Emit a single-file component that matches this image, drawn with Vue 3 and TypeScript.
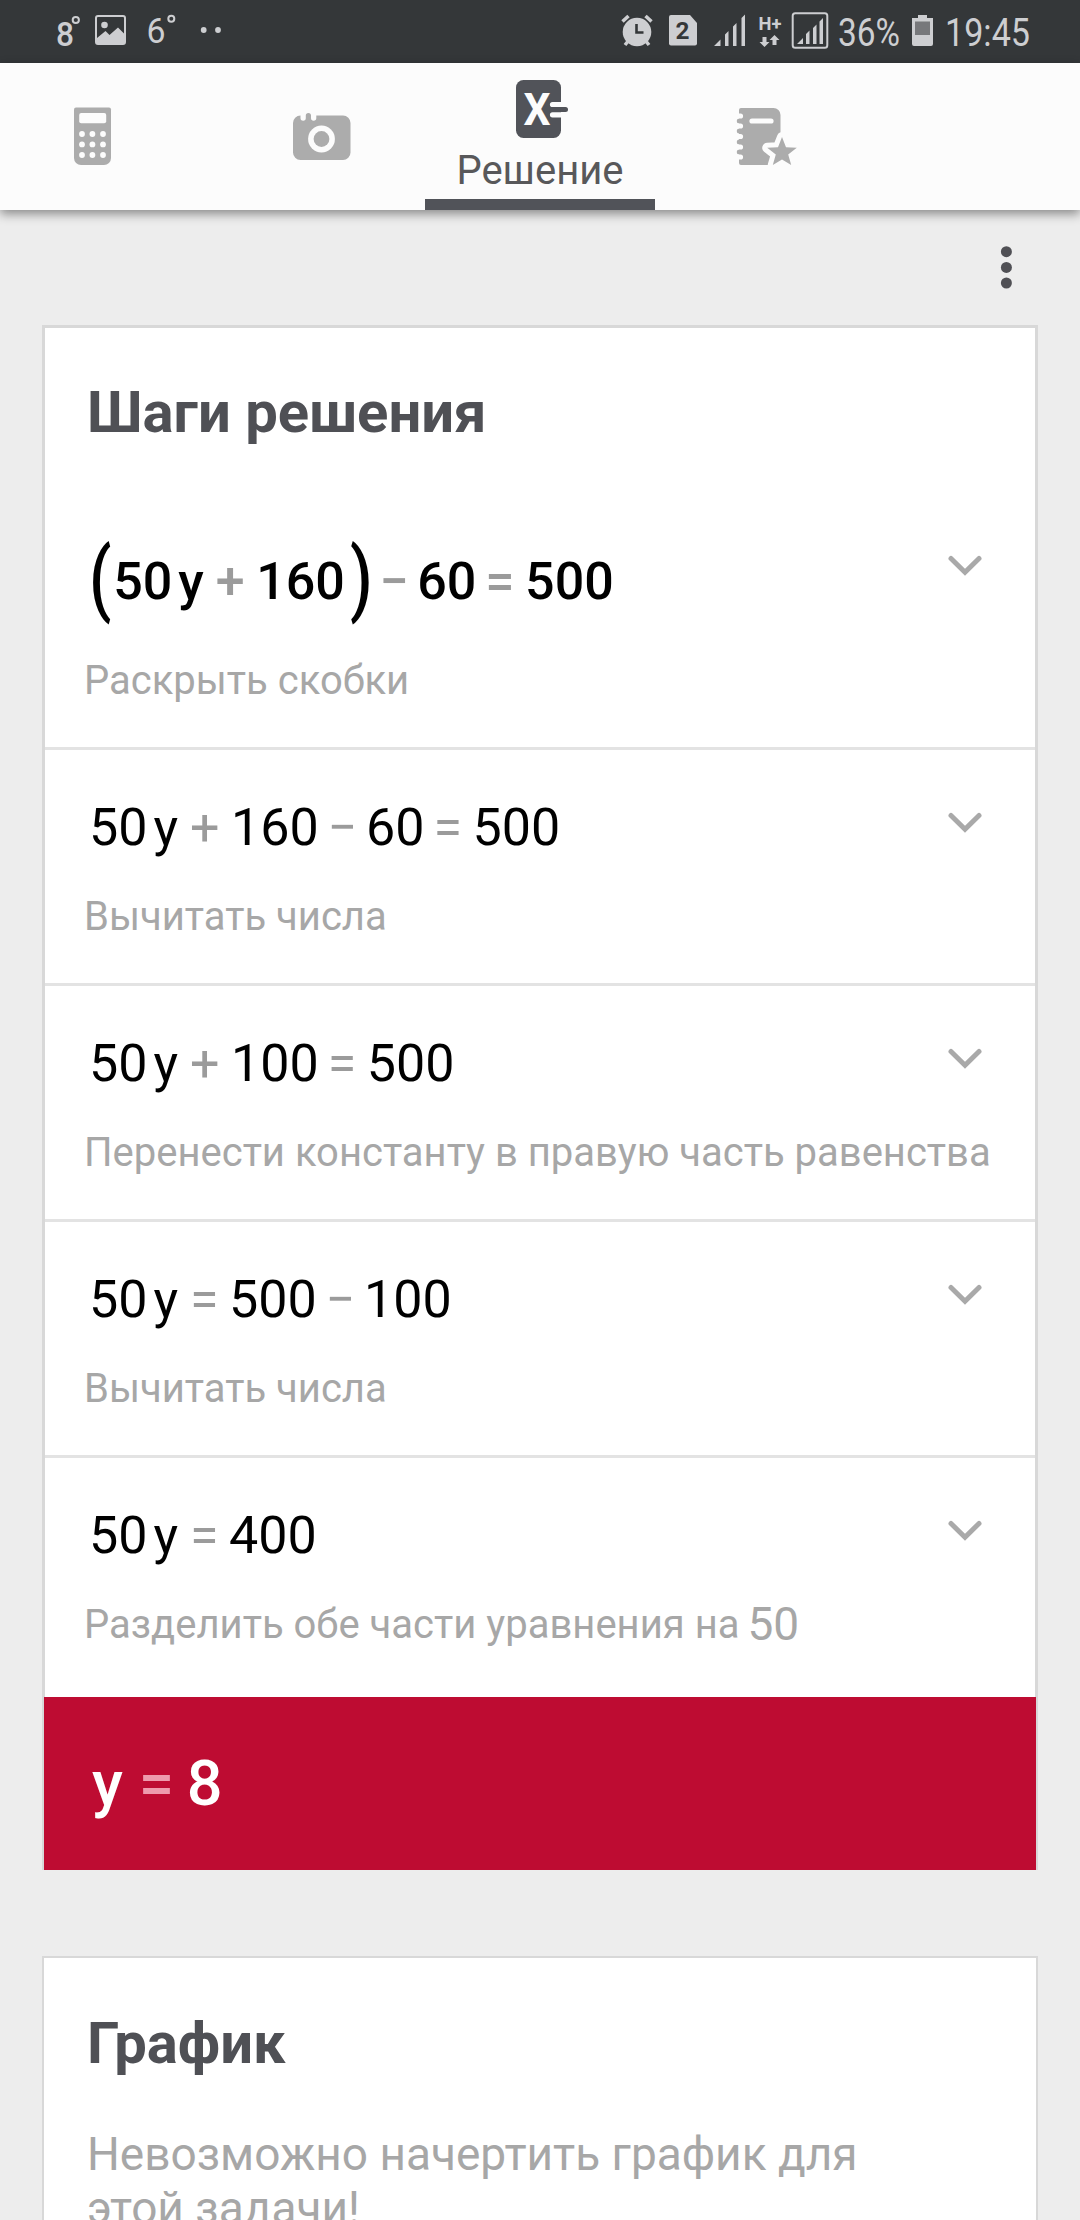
<script setup lang="ts">
interface Token {
  kind: string
  text: string
}

interface Step {
  tokens: Token[]
  caption: string
  value?: string
  current?: boolean
}

const operators: Record<string, string> = {
  '+': 'op plus',
  '−': 'op minus',
  '=': 'op equals',
  '(': 'paren open',
  ')': 'paren close',
}

function parse(source: string): Token[] {
  return source.split(' ').map((text) => ({
    kind: operators[text] ?? (/^\d+$/.test(text) ? 'num' : 'var'),
    text,
  }))
}

const steps: Step[] = [
  { tokens: parse('( 50 y + 160 ) − 60 = 500'), caption: 'Раскрыть скобки', current: true },
  { tokens: parse('50 y + 160 − 60 = 500'), caption: 'Вычитать числа' },
  { tokens: parse('50 y + 100 = 500'), caption: 'Перенести константу в правую часть равенства' },
  { tokens: parse('50 y = 500 − 100'), caption: 'Вычитать числа' },
  { tokens: parse('50 y = 400'), caption: 'Разделить обе части уравнения на', value: '50' },
]

const answer = parse('y = 8')
const keyColumns = [82, 92.4, 103]
const keyRows = [134, 144.4, 155]
</script>

<template>
  <div class="screen">
    <header class="status">
      <svg class="s-temp" viewBox="54 10 30 44" width="30" height="44">
        <text x="56" y="45.5" font-size="33" font-weight="500" textLength="18" lengthAdjust="spacingAndGlyphs">8</text>
        <circle cx="75.8" cy="20" r="3.1" class="line" />
      </svg>
      <svg class="s-photo" viewBox="95 10 31 44" width="31" height="44">
        <rect x="96" y="16" width="29" height="28" rx="2" class="line" />
        <circle cx="104.5" cy="25" r="3.3" />
        <path d="M97 38l8.500-7 4 4 8.500-7.500 7 7V44H97z" />
      </svg>
      <svg class="s-temp2" viewBox="146 10 32 44" width="32" height="44">
        <text x="146.500" y="43" font-size="35" textLength="19" lengthAdjust="spacingAndGlyphs">6</text>
        <circle cx="171.300" cy="18.700" r="3" class="line" />
      </svg>
      <svg class="s-more" viewBox="200 10 22 44" width="22" height="44">
        <circle cx="203.700" cy="30" r="2.900" />
        <circle cx="218" cy="30" r="2.900" />
      </svg>
      <svg class="s-alarm" viewBox="621 10 32 44" width="32" height="44">
        <circle cx="637" cy="32" r="14.300" />
        <path d="M622.500 21.500l6-5.500M651.500 21.500l-6-5.500M629 40l-4 5M645 40l4 5" class="line thick" />
        <path d="M636.500 24v8.500h7" class="dark-line" />
      </svg>
      <svg class="s-sim" viewBox="669 10 28 44" width="28" height="44">
        <path d="M671 15h19l7 8v20.500a2 2 0 0 1-2 2h-24a2 2 0 0 1-2-2V17a2 2 0 0 1 2-2z" />
        <text x="675.500" y="39" font-size="23" font-weight="700" class="dark" textLength="14" lengthAdjust="spacingAndGlyphs">2</text>
      </svg>
      <svg class="s-signal" viewBox="713 10 33 44" width="33" height="44">
        <path d="M714 46l6.500-6.500V46zM725 46V34.500l3.500-3.500v15zM733 46V26.500l3.500-3.500v23zM741.500 46V18l3.500-3.500V46z" />
      </svg>
      <svg class="s-data" viewBox="758 10 24 44" width="24" height="44">
        <text x="758.500" y="30.300" font-size="18.500" font-weight="700" textLength="23" lengthAdjust="spacingAndGlyphs">H+</text>
        <path d="M762.500 37h4v5h3l-5 5-5-5h3zM772.500 45h4v-5h3l-5-5-5 5h3z" />
      </svg>
      <svg class="s-signal2" viewBox="791 10 38 44" width="38" height="44">
        <rect x="792.700" y="13.200" width="34.600" height="34.600" rx="2.500" class="line" />
        <path d="M797 44l6-6v6zM806 44V34l3.500-3.500V44zM813 44V28l3.500-3.500V44zM819.500 44V21.500l3.500-3.500v26z" />
      </svg>
      <svg class="s-percent" viewBox="835 4 68 56" width="68" height="56">
        <text x="838" y="46" font-size="38.500" textLength="62" lengthAdjust="spacingAndGlyphs">36%</text>
      </svg>
      <svg class="s-battery" viewBox="912 10 21 44" width="21" height="44">
        <path d="M918 15h9v3h6v26a2 2 0 0 1-2 2h-17a2 2 0 0 1-2-2V18h6z" />
        <rect x="915" y="21.500" width="15" height="13.500" class="drained" />
      </svg>
      <svg class="s-clock" viewBox="942 4 92 56" width="92" height="56">
        <text x="945" y="46" font-size="38.500" textLength="85" lengthAdjust="spacingAndGlyphs">19:45</text>
      </svg>
    </header>

    <nav class="tabs">
      <a class="tab calc">
        <svg viewBox="74 107 38 58" width="38" height="58">
          <path d="M76 107.500h33a2 2 0 0 1 2 2V158a7 7 0 0 1-7 7H81a7 7 0 0 1-7-7v-48.500a2 2 0 0 1 2-2z" />
          <rect x="79.200" y="113" width="27" height="10.300" rx="2" class="hole" />
          <template v-for="cy in keyRows" :key="cy">
            <circle v-for="cx in keyColumns" :key="cx" :cx="cx" :cy="cy" r="2.900" class="hole" />
          </template>
        </svg>
      </a>
      <a class="tab camera">
        <svg viewBox="293 107 58 58" width="58" height="58">
          <path d="M300.500 115.500v2.500a2.500 2.500 0 0 0 5.300 0v-2.500a2.500 2.500 0 0 1 5.200 0v2.500a2.500 2.500 0 0 0 5.300 0v-2.500H343a7.500 7.500 0 0 1 7.500 7.500v29.500a7.500 7.500 0 0 1-7.500 7.500h-42.500a7.500 7.500 0 0 1-7.500-7.500V123a7.500 7.500 0 0 1 7.500-7.500z" />
          <circle cx="321.500" cy="139" r="13.400" class="hole" />
          <circle cx="321.500" cy="139" r="7.900" />
        </svg>
      </a>
      <a class="tab solution">
        <svg viewBox="516 80 53 58" width="53" height="58">
          <rect x="516" y="80" width="45" height="58" rx="7.500" />
          <text x="523.500" y="125" font-size="44" font-weight="700" class="hole" textLength="27" lengthAdjust="spacingAndGlyphs">X</text>
          <path d="M552.500 104.500H562M552.500 114.800H562" class="slot" />
          <path d="M552 109.500H565.500" class="dash" />
        </svg>
        <span class="tab-label">Решение</span>
        <span class="indicator"></span>
      </a>
      <a class="tab notebook">
        <svg viewBox="736 107 62 59" width="62" height="59">
          <path d="M741 108h32.500a7 7 0 0 1 7 7v50h-39.500a2 2 0 0 1-2-2v-53a2 2 0 0 1 2-2z" />
          <path d="M739.300 121h5M739.300 131h5M739.300 142h5M739.300 152h5" class="binding" />
          <path d="M736 116h4.500M736 126h4.500M736 136.500h4.500M736 147h4.500M736 157h4.500" class="gap-line" />
          <path d="M752 121h19" class="slot" />
          <path d="M782 137l4 10.200 10.800.6-8.600 6.800 3 10.400-9.200-5.600-9.200 5.600 3-10.400-8.600-6.800 10.800-.6z" class="halo" />
          <path d="M782 137l4 10.200 10.800.6-8.600 6.800 3 10.400-9.200-5.600-9.200 5.600 3-10.400-8.600-6.800 10.800-.6z" />
        </svg>
      </a>
    </nav>

    <main class="content">
      <div class="toolbar">
        <svg viewBox="1000 245 13 45" width="13" height="45">
          <circle cx="1006.400" cy="251.700" r="5.500" />
          <circle cx="1006.400" cy="267.400" r="5.500" />
          <circle cx="1006.400" cy="283" r="5.500" />
        </svg>
      </div>

      <section class="card">
        <h2 class="heading">Шаги решения</h2>
        <div v-for="(step, i) in steps" :key="i" class="step" :class="{ current: step.current }">
          <div class="math">
            <span v-for="(t, j) in step.tokens" :key="j" :class="t.kind">{{ t.text }}</span>
          </div>
          <p class="caption">{{ step.caption }}<span v-if="step.value" class="value">{{ step.value }}</span></p>
          <svg class="chevron" viewBox="0 0 34 21" width="34" height="21">
            <path d="M3 3.500L17 17.200 31 3.500" />
          </svg>
        </div>
        <div class="answer">
          <div class="math">
            <span v-for="(t, j) in answer" :key="j" :class="t.kind">{{ t.text }}</span>
          </div>
        </div>
      </section>

      <section class="card graph">
        <h2 class="heading">График</h2>
        <p class="note">Невозможно начертить график для<br />этой задачи!</p>
      </section>
    </main>
  </div>
</template>

<style>
body {
  margin: 0;
  background: #ededed;
}
</style>

<style scoped>
.screen {
  width: 1080px;
  height: 2220px;
  overflow: hidden;
  display: flex;
  flex-direction: column;
  background: #ededed;
  font-family: Roboto, sans-serif;
}

svg {
  display: block;
  flex: none;
}

.status {
  display: flex;
  flex: none;
  box-sizing: border-box;
  height: 63px;
  padding: 10px 0 0 54px;
  background: #343739;
}

.status svg {
  fill: #cdced1;
}

.status .line {
  fill: none;
  stroke: #cdced1;
  stroke-width: 2;
}

.status .thick {
  stroke-width: 3.5;
}

.status .dark-line {
  fill: none;
  stroke: #343739;
  stroke-width: 2.6;
}

.status .dark {
  fill: #343739;
}

.status .drained {
  fill: #77787b;
}

.s-photo { margin-left: 11px; }
.s-temp2 { margin-left: 20px; }
.s-more { margin-left: 22px; }
.s-alarm { margin-left: 399px; }
.s-sim { margin-left: 16px; }
.s-signal { margin-left: 16px; }
.s-data { margin-left: 12px; }
.s-signal2 { margin-left: 9px; }
.s-percent { margin: -6px 0 0 6px; }
.s-battery { margin-left: 9px; }
.s-clock { margin: -6px 0 0 9px; }

.tabs {
  display: flex;
  flex: none;
  height: 147px;
  background: #fcfcfc;
  box-shadow: 0 4px 10px rgba(0, 0, 0, 0.42);
}

.tab {
  display: flex;
  flex-direction: column;
  align-items: center;
  box-sizing: border-box;
  padding-top: 44px;
  fill: #acacac;
}

.calc { width: 186px; }
.camera { width: 206px; margin-left: 33px; }
.notebook { width: 224px; }

.solution {
  width: 230px;
  padding: 17px 0 0;
  fill: #515359;
}

.solution svg {
  margin-left: 5px;
}

.hole {
  fill: #fcfcfc;
}

.slot,
.halo,
.gap-line {
  stroke: #fcfcfc;
  stroke-width: 5.2;
  stroke-linecap: round;
  fill: none;
}

.halo {
  stroke-width: 10;
  stroke-linejoin: round;
}

.dash {
  stroke: #515359;
  stroke-width: 5;
  stroke-linecap: round;
}

.binding {
  stroke: #acacac;
  stroke-width: 5;
  stroke-linecap: round;
}

.tab-label {
  margin-top: 10px;
  font-size: 40px;
  line-height: 46px;
  color: #58585a;
}

.indicator {
  width: 230px;
  height: 11px;
  margin-top: auto;
  background: #515359;
}

.content {
  display: flex;
  flex-direction: column;
  padding: 0 42px;
}

.toolbar {
  display: flex;
  justify-content: flex-end;
  height: 80px;
  padding: 35px 25px 0 0;
  fill: #505055;
}

.card {
  border: 3px solid #d8d8d8;
  border-bottom: 0;
  background: #fff;
}

.heading {
  margin: 0;
  padding: 49px 0 0 42px;
  font-size: 58px;
  line-height: 70px;
  font-weight: 700;
  color: #4f5055;
}

.step {
  position: relative;
  box-sizing: border-box;
  height: 236px;
  padding: 48px 0 0 39px;
  border-bottom: 3px solid #e3e3e3;
}

.step.current {
  height: 303px;
  padding-top: 105px;
}

.step:nth-last-child(2) {
  height: 239px;
  border-bottom: 0;
}

.math {
  height: 60px;
  padding-left: 5px;
  font-size: 52px;
  line-height: 60px;
  white-space: nowrap;
  color: #000;
}

.current .math {
  font-weight: 500;
}

.op {
  margin-left: 12px;
  color: #9b9b9b;
}

.plus { margin-right: 11.5px; }
.minus { margin-right: 8.5px; }
.equals { margin-right: 10.5px; }

.num + .op {
  margin-left: 9px;
}

.num + .var {
  margin-left: 6px;
}

.paren {
  display: inline-block;
  width: 27.7px;
  font-size: 81px;
  line-height: 0;
  font-weight: 500;
  vertical-align: -6.6px;
  transform: scaleX(0.8);
  transform-origin: 0 50%;
}

.open {
  margin-right: -3.5px;
}

.close {
  margin-left: 5px;
}

.close + .op {
  margin-left: 2px;
}

.caption {
  margin: 36px 0 0;
  font-size: 40px;
  line-height: 46px;
  white-space: nowrap;
  color: #a7a7a7;
}

.current .caption {
  margin-top: 46px;
}

.value {
  margin-left: 8px;
  font-size: 46px;
  line-height: 0;
  vertical-align: -2px;
}

.chevron {
  position: absolute;
  top: 61.5px;
  right: 53px;
}

.current .chevron {
  top: 107.5px;
}

.chevron path {
  fill: none;
  stroke: #a9a9a9;
  stroke-width: 5;
  stroke-linecap: round;
}

.answer {
  height: 173px;
  margin: 0 -1px;
  background: #be0c32;
}

.answer .math {
  padding: 49px 0 0 48px;
  font-size: 63px;
  font-weight: 500;
  line-height: 76px;
  color: #fff;
}

.answer .op {
  margin: 0 12.5px 0 16px;
  color: #ee9bad;
}

.graph {
  height: 300px;
  margin-top: 86px;
  border-width: 2px;
}

.graph .heading {
  padding-left: 43px;
  padding-top: 50px;
}

.note {
  margin: 49px 0 0 43px;
  font-size: 46px;
  line-height: 54px;
  color: #a7a7a7;
}
</style>
